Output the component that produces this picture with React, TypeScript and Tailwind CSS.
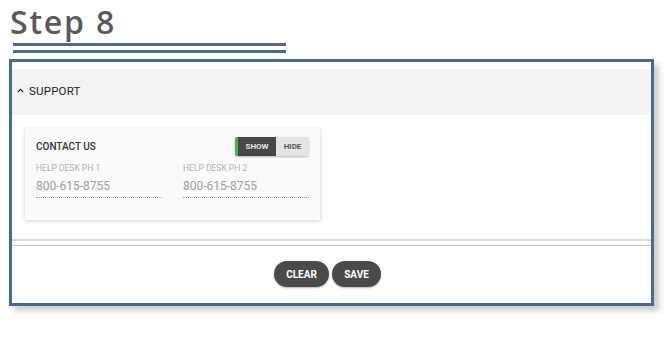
export default function App() {
  const fields = [
    { label: "HELP DESK PH 1", value: "800-615-8755" },
    { label: "HELP DESK PH 2", value: "800-615-8755" },
  ];

  return (
    <div className="w-[670px] h-[343px] bg-white font-['Roboto',sans-serif] overflow-hidden">
      <div className="pl-[10px] pt-[4px] h-[40px] text-[32px] leading-[36px] font-semibold tracking-[1.8px] text-[#5a5a5a] font-['Open_Sans',sans-serif]">
        Step 8
      </div>
      <div className="ml-[13px] mt-[3px] w-[273px]">
        <div className="h-[3px] bg-[#4b6a8f]" />
        <div className="h-[3px] mt-[4px] bg-[#4b6a8f]" />
      </div>

      <div className="ml-[9px] mt-[6px] w-[645px] h-[247px] border-[3px] border-[#4a698e] bg-white shadow-[5px_5px_6px_rgba(0,0,0,0.2)]">
        <div className="pt-[7px]">
          <div className="h-[46px] bg-[#f3f3f3] flex items-center pl-[5px] gap-[5px]">
            <svg width="7" height="5" viewBox="0 0 7 5" className="mt-[-3px]">
              <path d="M0.8 4.2 L3.5 1.3 L6.2 4.2" fill="none" stroke="#222" strokeWidth="1.2" />
            </svg>
            <span className="text-[11.5px] text-[#222] tracking-[0.2px]">SUPPORT</span>
          </div>
        </div>

        <div className="ml-[13px] mt-[13px] w-[295px] h-[92px] bg-[#fafafa] shadow-[0_1px_4px_rgba(0,0,0,0.2)] px-[11px] pt-[9px]">
          <div className="flex items-center justify-between h-[19px]">
            <span className="text-[10px] font-medium text-[#333]">CONTACT US</span>
            <div className="flex h-[19px] rounded-[2px] overflow-hidden shadow-[0_1px_2px_rgba(0,0,0,0.25)] text-[8px] font-bold">
              <div className="w-[3px] bg-[#4caf50]" />
              <div className="w-[38px] bg-[#474747] text-[#e8e8e8] flex items-center justify-center">SHOW</div>
              <div className="w-[33px] bg-[#e4e4e4] text-[#555] flex items-center justify-center">HIDE</div>
            </div>
          </div>
          <div className="flex gap-[21px] mt-[7px]">
            {fields.map((f) => (
              <div key={f.label} className="w-[126px]">
                <div className="text-[8.5px] leading-[10px] text-[#b3b3b3]">{f.label}</div>
                <div className="mt-[5px] text-[12px] leading-[16px] text-[#a0a0a0] pb-[3px] border-b border-dotted border-[#999]">
                  {f.value}
                </div>
              </div>
            ))}
          </div>
        </div>

        <div className="mt-[19px] h-[2px] bg-[#dadada]" />
        <div className="mt-[4px] h-[1px] bg-[#cfcfcf]" />

        <div className="flex justify-center gap-[3px] mt-[15px] pr-[8px]">
          <button className="w-[55px] h-[26px] rounded-full bg-[#4a4a4a] text-white text-[10px] font-bold shadow-[0_1px_2px_rgba(0,0,0,0.3)]">
            CLEAR
          </button>
          <button className="w-[49px] h-[26px] rounded-full bg-[#4a4a4a] text-white text-[10px] font-bold shadow-[0_1px_2px_rgba(0,0,0,0.3)]">
            SAVE
          </button>
        </div>
      </div>
    </div>
  );
}
